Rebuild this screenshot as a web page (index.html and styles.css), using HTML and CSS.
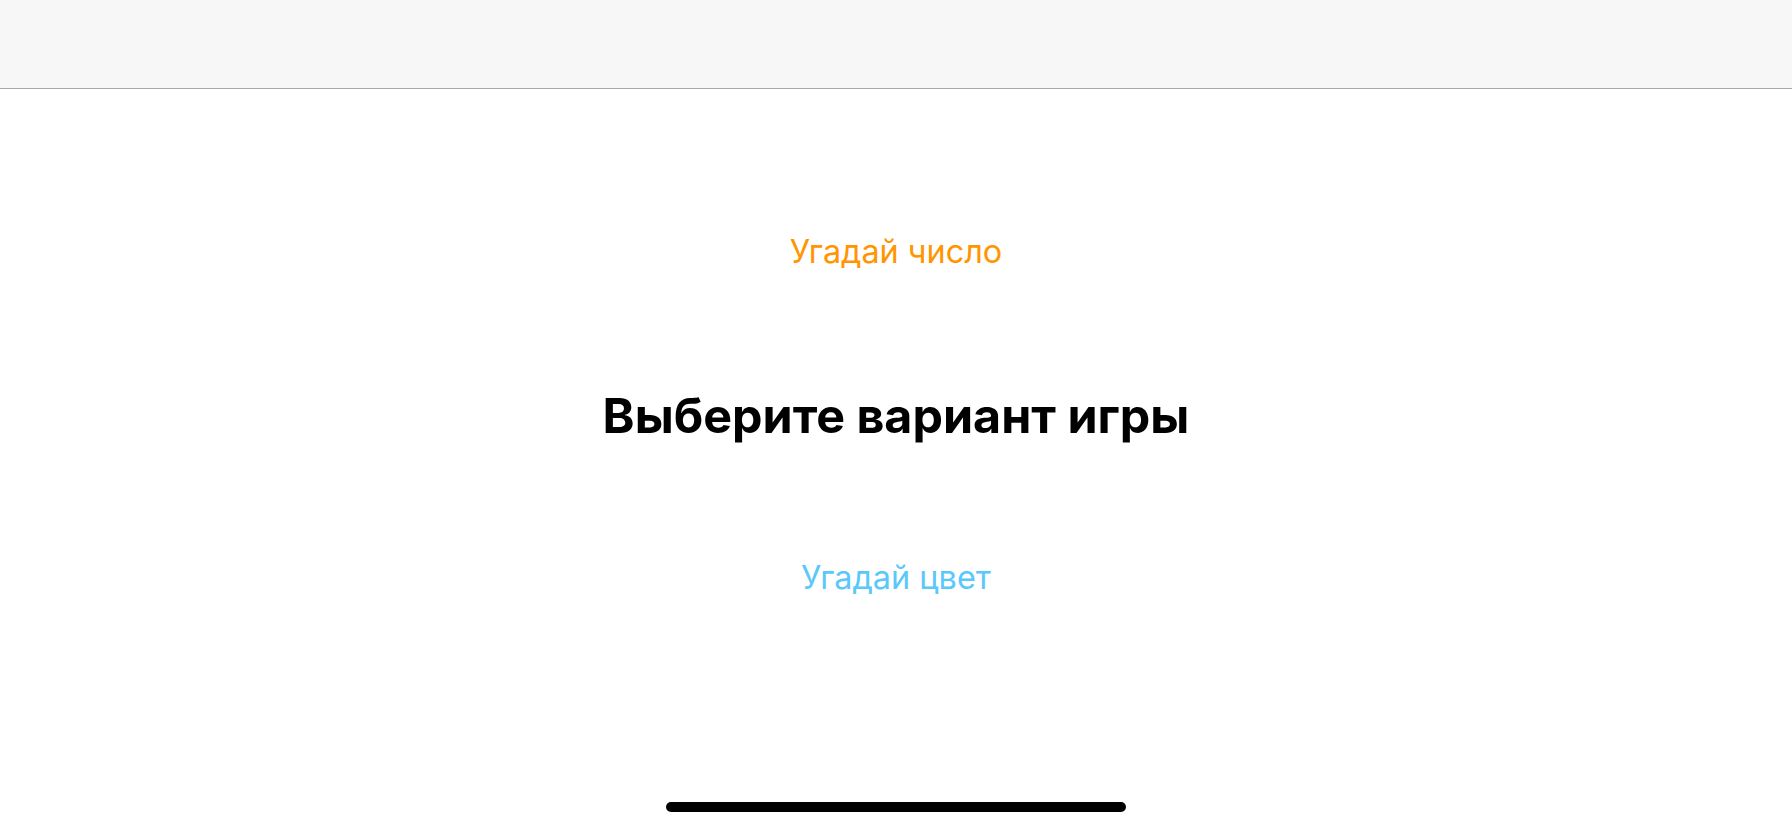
FILE: index.html
```html
<!DOCTYPE html>
<html lang="ru">
<head>
<meta charset="utf-8">
<title>Выберите вариант игры</title>
<link rel="stylesheet" href="styles.css">
</head>
<body>
<header class="navbar"></header>
<main class="menu">
  <a class="option option-number" href="#">Угадай число</a>
  <h1 class="title">Выберите вариант игры</h1>
  <a class="option option-color" href="#">Угадай цвет</a>
</main>
<div class="home-indicator"></div>
</body>
</html>
```
FILE: styles.css
```css
html, body {
  margin: 0;
  padding: 0;
  background: #ffffff;
  font-family: Inter, "Noto Sans", "Liberation Sans", sans-serif;
  height: 100%;
  overflow: hidden;
}

.navbar {
  height: 88px;
  background: #f7f7f7;
  border-bottom: 1px solid #a9a9a9;
}

.menu {
  display: flex;
  flex-direction: column;
  align-items: center;
  padding-top: 144px;
}

.option {
  display: block;
  font-size: 32.4px;
  line-height: 38px;
  text-decoration: none;
  font-weight: 400;
}

.option-number {
  color: #ff9500;
}

.option-color {
  color: #5ac8fa;
  margin-top: 115px;
}

.title {
  margin: 117px 0 0;
  font-size: 48.4px;
  line-height: 56px;
  font-weight: 700;
  color: #000000;
}

.home-indicator {
  position: fixed;
  left: 50%;
  bottom: 16px;
  width: 460px;
  height: 10px;
  margin-left: -230px;
  border-radius: 5px;
  background: #000000;
}
```
